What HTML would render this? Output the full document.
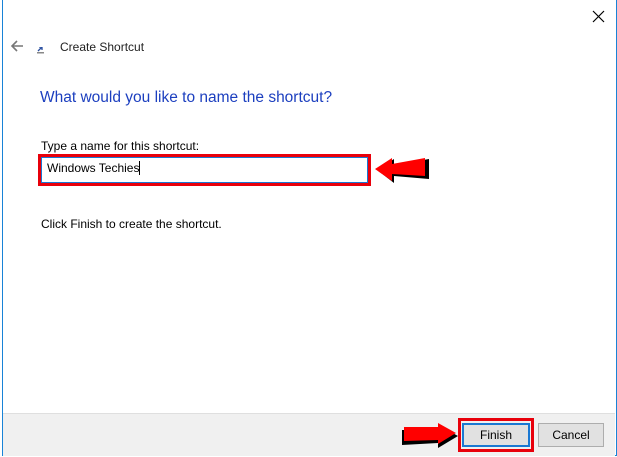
<!DOCTYPE html>
<html><head><style>
body{margin:0;width:617px;height:457px;background:#fff;position:relative;overflow:hidden;font-family:"Liberation Sans",sans-serif;font-size:12px;color:#000}
.a{position:absolute}
</style></head><body>
<div class="a" style="left:2px;top:0;width:613px;height:455px;border-left:1px solid #1883d7;border-right:1px solid #1883d7;border-bottom:1px solid #1883d7;"></div>
<div class="a" style="left:3px;top:413px;width:612px;height:42px;background:#f0f0f0;border-top:1px solid #dfdfdf"></div>
<svg class="a" style="left:592px;top:10px" width="13" height="13"><path d="M1 1L12 12M12 1L1 12" stroke="#000" stroke-width="1.2"/></svg>
<svg class="a" style="left:10px;top:40px" width="14" height="12"><path d="M13 6H2M7 1L2 6L7 11" stroke="#777" stroke-width="1.6" fill="none"/></svg>
<svg class="a" style="left:37px;top:47px" width="7" height="7"><rect x="0" y="5" width="7" height="1.5" fill="#888"/><path d="M1 4L5 0M2 0H5V3" stroke="#2a4fa0" stroke-width="1.3" fill="none"/></svg>
<div class="a" style="left:60px;top:40px;font-size:12px;color:#222">Create Shortcut</div>
<div class="a" style="left:40px;top:89px;font-size:15.5px;color:#1c3fbf">What would you like to name the shortcut?</div>
<div class="a" style="left:41px;top:139px">Type a name for this shortcut:</div>
<div class="a" style="left:38px;top:154px;width:327px;height:26px;border:3px solid #e8000b"></div>
<div class="a" style="left:41px;top:157px;width:325px;height:24px;border:1px solid #1a78d2;background:#fff"></div>
<div class="a" style="left:47px;top:161px">Windows Techies<span style="display:inline-block;width:1px;height:14px;background:#000;vertical-align:-3px"></span></div>
<svg class="a" style="left:372px;top:155px" width="60" height="30"><path d="M3 14L20 3V9L55 3L55 23L20 20V27Z" fill="#000" transform="translate(2,1)"/><path d="M3 14L20 3V9L53 3L53 21L20 19V26Z" fill="#f00"/></svg>
<div class="a" style="left:41px;top:217px">Click Finish to create the shortcut.</div>
<svg class="a" style="left:400px;top:422px" width="62" height="28"><path d="M2 6L38 6V1L58 12L38 24V19L2 21Z" fill="#000" transform="translate(0,2)"/><path d="M4 5L38 5V1L56 11L38 22V18L4 19Z" fill="#f00"/></svg>
<div class="a" style="left:458px;top:418px;width:70px;height:28px;border:3px solid #e8000b"></div>
<div class="a" style="left:462px;top:423px;width:64px;height:20px;border:2px solid #1a78d2;background:#e1e1e1;text-align:center;line-height:20px">Finish</div>
<div class="a" style="left:538px;top:423px;width:64px;height:22px;border:1px solid #adadad;background:#e1e1e1;text-align:center;line-height:22px">Cancel</div>
</body></html>
